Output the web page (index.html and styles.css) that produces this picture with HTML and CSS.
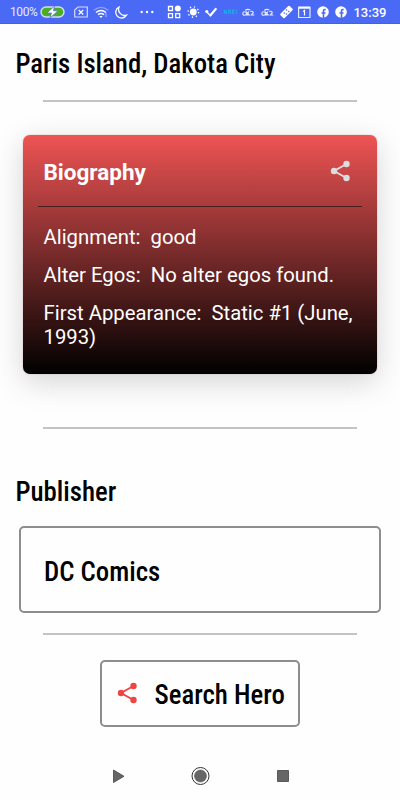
FILE: index.html
```html
<!DOCTYPE html>
<html lang="en">
  <head>
    <meta charset="UTF-8" />
    <meta name="viewport" content="width=device-width, initial-scale=1.0" />
    <title>Hero Details</title>
    <link rel="stylesheet" href="styles.css">
  </head>
  <body>
    <header class="status-bar">
      <span class="battery-level">100%</span>
      <svg class="battery" viewBox="0 0 26 12">
        <rect x="1" y="1" width="23" height="10" rx="5" fill="#4cae20" stroke="#d5dcfb" stroke-width="1.4" />
        <path d="M14.500 0 7 7h4.500L10 12l8-7.200h-4.500z" fill="#fff" stroke="#4a69f5" stroke-width=".7" />
      </svg>
      <svg class="icon icon-sim" viewBox="0 0 14 12">
        <path d="M4 1h9.300v10H.7V4z" fill="none" stroke="#d5dcfb" stroke-width="1.200" />
        <path d="M4.700 4l4.500 4.500M9.200 4 4.700 8.500" stroke="#fff" stroke-width="1.200" />
      </svg>
      <svg class="icon icon-wifi" viewBox="0 0 16 12">
        <path d="M.8 4.300Q8-1.500 15.200 4.300" fill="none" stroke="#8da1f9" stroke-width="1.400" />
        <path d="M3 6.500q5-4 10 0M5 8.700q3-2.300 6 0" fill="none" stroke="#fff" stroke-width="1.500" />
        <path d="M6.300 10h3.400L8 12z" fill="#fff" />
        <path d="M13 7v4" stroke="#aebcfb" />
      </svg>
      <svg class="icon icon-moon" viewBox="0 0 14 13">
        <path d="M5 1A5.800 5.800 0 1 0 12.500 9.200 6.200 6.200 0 0 1 5 1z" fill="none" stroke="#fff" stroke-width="1.300" />
      </svg>
      <svg class="icon icon-dots" viewBox="0 0 14 12" fill="#fff">
        <circle cx="1.700" cy="6" r="1.200" /><circle cx="7" cy="6" r="1.200" /><circle cx="12.300" cy="6" r="1.200" />
      </svg>
      <div class="notifications">
        <svg viewBox="0 0 18 14">
          <path d="M3.200 1.500h4v4h-4zM3.200 8.700h4v4h-4zM10.400 8.700h4v4h-4z" fill="none" stroke="#fff" stroke-width="1.300" />
          <circle cx="12.500" cy="3.500" r="3" fill="#fff" />
        </svg>
        <svg viewBox="0 0 18 14">
          <circle cx="9" cy="7" r="3.400" fill="#fff" />
          <circle cx="9" cy="7" r="5.200" fill="none" stroke="#fff" stroke-width="1.400" stroke-dasharray="1.300 2.784" />
        </svg>
        <svg viewBox="0 0 18 14">
          <path d="M8 10.500 13.500 4" stroke="#fff" stroke-width="2.200" stroke-linecap="round" />
          <path d="M5 7.500 7.200 9.800" stroke="#fff" stroke-width="1.400" />
          <circle cx="4.500" cy="6.500" r="1.600" fill="#fff" />
        </svg>
        <svg viewBox="0 0 18 14">
          <path d="M3 9V5l2 4V5m2 4V5h2v4M7 7h2m2 2V5h2l-2 2 2 2m2 0V5" fill="none" stroke="#20a5e8" stroke-width="1.100" />
        </svg>
        <svg viewBox="0 0 18 14">
          <path d="M3.500 8.500q0-1.800 1.800-1.800t1.800 1.800-1.800 1.800-1.800-1.800M7 6.500l3 3.500M9.500 6.500 7.500 10h3M11 6.500q3-.8 3 1.200l-2 2.300h3M6 5.500q2-2 5-.5" fill="none" stroke="#e6eafd" stroke-width="1.100" />
        </svg>
        <svg viewBox="0 0 18 14">
          <path d="M3.500 8.500q0-1.800 1.800-1.800t1.800 1.800-1.800 1.800-1.800-1.800M7 6.500l3 3.500M9.500 6.500 7.500 10h3M11 6.500q3-.8 3 1.200l-2 2.300h3M6 5.500q2-2 5-.5" fill="none" stroke="#e6eafd" stroke-width="1.100" />
        </svg>
        <svg viewBox="0 0 18 14">
          <rect x="2.700" y="4" width="13" height="6" rx="1" fill="#fff" transform="rotate(-45 9.200 7)" />
          <g fill="#4a69f5"><circle cx="9.200" cy="5" r=".8" /><circle cx="11.500" cy="6.500" r=".8" /><circle cx="7" cy="8" r=".8" /><circle cx="9.200" cy="9" r=".8" /></g>
        </svg>
        <svg viewBox="0 0 18 14">
          <path d="M3.300 3h11.400v9.500H3.300z" fill="none" stroke="#e6eafd" stroke-width="1.200" />
          <path d="M3 2.500h12" stroke="#fff" stroke-width="2" />
          <path d="M7.800 6.500 9.200 5.500v5" fill="none" stroke="#fff" stroke-width="1.200" />
        </svg>
        <svg viewBox="0 0 18 14">
          <circle cx="8.700" cy="7" r="5.800" fill="#fff" />
          <path d="M9.200 13V6q0-1.700 2.200-1.500M7.200 8h4" fill="none" stroke="#4a69f5" stroke-width="1.600" />
        </svg>
        <svg viewBox="0 0 18 14">
          <circle cx="8.700" cy="7" r="5.800" fill="#fff" />
          <path d="M9.200 13V6q0-1.700 2.200-1.500M7.200 8h4" fill="none" stroke="#4a69f5" stroke-width="1.600" />
        </svg>
      </div>
      <span class="clock">13:39</span>
    </header>

    <main class="container">
      <h2 class="section-title">Paris Island, Dakota City</h2>
      <hr class="divider">

      <section class="card">
        <div class="card-header">
          <h3>Biography</h3>
          <svg class="share" viewBox="0 0 20 22">
            <path d="M16.500 4 4 11l12.500 7" fill="none" stroke="currentColor" stroke-width="1.900" />
            <g fill="currentColor"><circle cx="16.500" cy="4" r="3.200" /><circle cx="4" cy="11" r="3.200" /><circle cx="16.500" cy="18" r="3.200" /></g>
          </svg>
        </div>
        <div class="card-body">
          <p>Alignment:&nbsp; good</p>
          <p>Alter Egos:&nbsp; No alter egos found.</p>
          <p>First Appearance:&nbsp; Static #1 (June, 1993)</p>
        </div>
      </section>

      <hr class="divider">
      <h2 class="section-title publisher-title">Publisher</h2>
      <div class="publisher-box">DC Comics</div>
      <hr class="divider divider-last">

      <button class="search-btn">
        <svg class="share" viewBox="0 0 20 22">
          <path d="M16.500 4 4 11l12.500 7" fill="none" stroke="currentColor" stroke-width="1.900" />
          <g fill="currentColor"><circle cx="16.500" cy="4" r="3.200" /><circle cx="4" cy="11" r="3.200" /><circle cx="16.500" cy="18" r="3.200" /></g>
        </svg>
        <span>Search Hero</span>
      </button>
    </main>

    <nav class="nav-bar">
      <svg viewBox="0 0 20 20"><path d="M5.500 4v12.500L16 10.300z" fill="#666" stroke="#444" stroke-width=".8" /></svg>
      <svg viewBox="0 0 20 20"><circle cx="9.500" cy="10" r="8.500" fill="none" stroke="#333" /><circle cx="9.500" cy="10" r="6" fill="#666" stroke="#555" stroke-width=".6" /></svg>
      <svg viewBox="0 0 20 20"><path d="M4.500 4.500h11v11h-11z" fill="#666" stroke="#444" stroke-width=".8" /></svg>
    </nav>
  </body>
</html>
```

FILE: styles.css
```css
body {
  font-family: Roboto, sans-serif;
  margin: 0;
  height: 800px;
  overflow: hidden;
  display: flex;
  flex-direction: column;
  background-color: #fefefe;
  color: #000;
}

h2,
h3,
p {
  margin: 0;
}

.status-bar {
  display: flex;
  align-items: center;
  box-sizing: border-box;
  height: 24px;
  flex: none;
  padding: 1px 0 0 10px;
  background-color: #4a69f5;
  border-bottom: 1px solid #4060ee;
  color: #fff;
}

.status-bar svg {
  flex: none;
}

.battery-level {
  width: 30px;
  font-size: 12px;
  letter-spacing: -0.4px;
  color: #e4e9fe;
}

.battery {
  width: 26px;
  height: 12px;
}

.icon {
  height: 12px;
}

.icon-sim {
  width: 14px;
  margin-left: 8px;
}

.icon-wifi {
  width: 16px;
  margin-left: 5px;
}

.icon-moon {
  width: 14px;
  height: 13px;
  margin-left: 5px;
}

.icon-dots {
  width: 14px;
  margin-left: 12px;
}

.notifications {
  display: flex;
  margin-left: 11px;
}

.notifications svg {
  width: 18.6px;
  height: 14px;
}

.clock {
  margin-left: 2.5px;
  font-size: 13px;
  font-weight: 500;
}

.container {
  display: flex;
  flex-direction: column;
}

.section-title,
.publisher-box,
.search-btn {
  font-family: "Roboto Condensed", Roboto, sans-serif;
  font-stretch: condensed;
  font-size: 26.8px;
  font-weight: 500;
  line-height: 30px;
}

.section-title {
  margin: 25px 0 0 15.4px;
}

.divider {
  width: 314px;
  height: 2px;
  margin: 21px auto 0;
  border: none;
  background-color: #c3c3c3;
}

.card {
  box-sizing: border-box;
  width: 354px;
  height: 239px;
  margin: 33px 0 32px 23px;
  padding: 0 15px;
  border-radius: 7px;
  background: linear-gradient(#ef5454, #000);
  box-shadow: 0 8px 30px rgba(0, 0, 0, 0.17), 0 0 1px rgba(150, 0, 0, 0.6);
  color: #fff;
}

.card-header {
  display: flex;
  align-items: center;
  justify-content: space-between;
  height: 71px;
  padding: 0 12px 0 5.5px;
  border-bottom: 1px solid #4a2022;
}

.card-header h3 {
  padding-top: 3px;
  font-size: 22.5px;
  line-height: 28px;
}

.share {
  width: 20px;
  height: 22px;
}

.card-header .share {
  color: #ddd;
}

.card-body {
  display: flex;
  flex-direction: column;
  gap: 14px;
  padding: 18px 0 0 5.5px;
  font-size: 20.3px;
  line-height: 24px;
}

.publisher-title {
  margin-top: 48px;
}

.publisher-box {
  box-sizing: border-box;
  width: 362px;
  height: 87px;
  margin: 19px 0 0 19px;
  padding: 29px 23px 0;
  border: 2px solid #8d8d8d;
  border-radius: 5px;
}

.divider-last {
  margin-top: 20px;
}

.search-btn {
  display: flex;
  align-items: center;
  box-sizing: border-box;
  width: 200px;
  height: 67px;
  margin: 25px auto 0;
  padding: 2px 12px 0 15px;
  border: 2px solid #8d8d8d;
  border-radius: 5px;
  background: none;
  color: #000;
}

.search-btn .share {
  margin: 0 17.5px 4px 0;
  color: #ee4444;
}

.search-btn span {
  padding-top: 1px;
  white-space: nowrap;
}

.nav-bar {
  display: flex;
  justify-content: space-between;
  padding: 39px 107px 0 108px;
}

.nav-bar svg {
  width: 20px;
  height: 20px;
}
```
